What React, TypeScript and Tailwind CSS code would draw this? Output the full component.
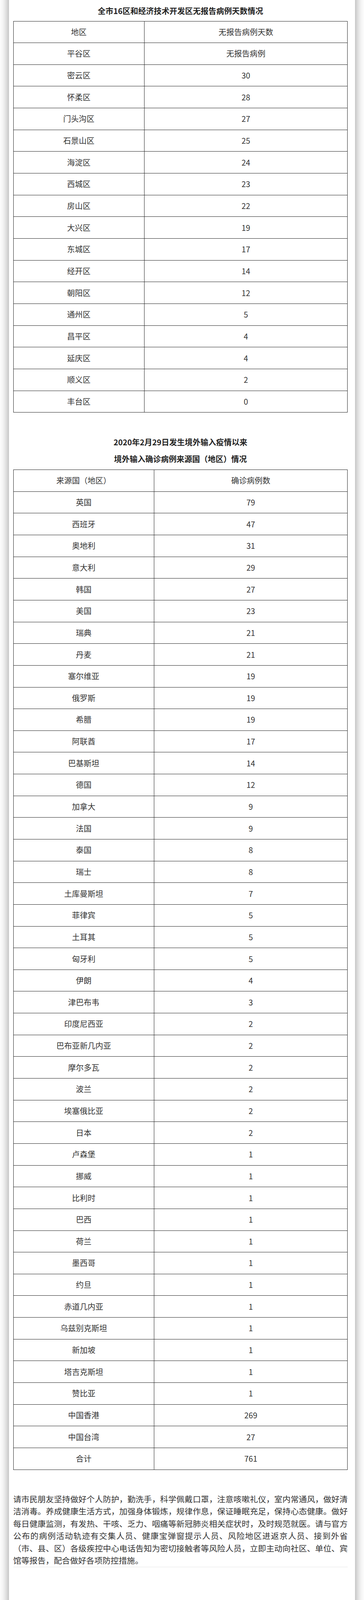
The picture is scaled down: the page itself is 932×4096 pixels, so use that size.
import React from 'react';

const districts: [string, string][] = [
  ['平谷区', '无报告病例'],
  ['密云区', '30'],
  ['怀柔区', '28'],
  ['门头沟区', '27'],
  ['石景山区', '25'],
  ['海淀区', '24'],
  ['西城区', '23'],
  ['房山区', '22'],
  ['大兴区', '19'],
  ['东城区', '17'],
  ['经开区', '14'],
  ['朝阳区', '12'],
  ['通州区', '5'],
  ['昌平区', '4'],
  ['延庆区', '4'],
  ['顺义区', '2'],
  ['丰台区', '0'],
];

const sources: [string, string][] = [
  ['英国', '79'],
  ['西班牙', '47'],
  ['奥地利', '31'],
  ['意大利', '29'],
  ['韩国', '27'],
  ['美国', '23'],
  ['瑞典', '21'],
  ['丹麦', '21'],
  ['塞尔维亚', '19'],
  ['俄罗斯', '19'],
  ['希腊', '19'],
  ['阿联酋', '17'],
  ['巴基斯坦', '14'],
  ['德国', '12'],
  ['加拿大', '9'],
  ['法国', '9'],
  ['泰国', '8'],
  ['瑞士', '8'],
  ['土库曼斯坦', '7'],
  ['菲律宾', '5'],
  ['土耳其', '5'],
  ['匈牙利', '5'],
  ['伊朗', '4'],
  ['津巴布韦', '3'],
  ['印度尼西亚', '2'],
  ['巴布亚新几内亚', '2'],
  ['摩尔多瓦', '2'],
  ['波兰', '2'],
  ['埃塞俄比亚', '2'],
  ['日本', '2'],
  ['卢森堡', '1'],
  ['挪威', '1'],
  ['比利时', '1'],
  ['巴西', '1'],
  ['荷兰', '1'],
  ['墨西哥', '1'],
  ['约旦', '1'],
  ['赤道几内亚', '1'],
  ['乌兹别克斯坦', '1'],
  ['新加坡', '1'],
  ['塔吉克斯坦', '1'],
  ['赞比亚', '1'],
  ['中国香港', '269'],
  ['中国台湾', '27'],
  ['合计', '761'],
];

const notice = [
  '请市民朋友坚持做好个人防护，勤洗手，科学佩戴口罩，注意咳嗽礼仪，室内常通风，做好清',
  '洁消毒。养成健康生活方式，加强身体锻炼，规律作息，保证睡眠充足，保持心态健康。做好',
  '每日健康监测，有发热、干咳、乏力、咽痛等新冠肺炎相关症状时，及时规范就医。请与官方',
  '公布的病例活动轨迹有交集人员、健康宝弹窗提示人员、风险地区进返京人员、接到外省',
  '（市、县、区）各级疾控中心电话告知为密切接触者等风险人员，立即主动向社区、单位、宾',
  '馆等报告，配合做好各项防控措施。',
];

const DataTable: React.FC<{ head: [string, string]; rows: [string, string][]; wide?: boolean }> = ({ head, rows, wide }) => {
  const all = [head, ...rows];
  return (
    <div className="border-t border-l border-r border-[#222]">
      {all.map(([a, b], i) => (
        <div
          key={i}
          className={
            wide
              ? 'grid grid-cols-[360.2px_1fr] h-[55.65px] border-b border-[#222]'
              : 'grid grid-cols-[335.2px_1fr] h-[55.66px] border-b border-[#222]'
          }
        >
          <div className="flex items-center justify-center border-r border-[#222]">{a}</div>
          <div className="flex items-center justify-center">{b}</div>
        </div>
      ))}
    </div>
  );
};

export default function App() {
  return (
    <div className="min-h-[4096px] bg-white overflow-hidden font-['Noto_Sans_CJK_SC','Noto_Sans',sans-serif] text-[#333]">
      <div className="mx-[23.3px] -mt-[40px] pt-[40px] min-h-[4180px] bg-white shadow-[0_0_24px_rgba(0,0,0,0.45)] pl-[10.4px] pr-[18.4px]">
        {/* 无报告病例天数 */}
        <h2 className="mt-[13px] text-center text-[20px] leading-[29px] font-bold text-[#222]">
          全市16区和经济技术开发区无报告病例天数情况
        </h2>
        <div className="mt-[11.5px] text-[20px]">
          <DataTable head={['地区', '无报告病例天数']} rows={districts} />
        </div>

        {/* 境外输入来源 */}
        <div className="mt-[53.5px] text-center text-[20px] leading-[43px] font-bold text-[#222]">
          <div>2020年2月29日发生境外输入疫情以来</div>
          <div>境外输入确诊病例来源国（地区）情况</div>
        </div>
        <div className="mt-[6.3px] text-[20px]">
          <DataTable head={['来源国（地区）', '确诊病例数']} rows={sources} wide />
        </div>

        {/* 提示 */}
        <div className="mt-[59.3px] border-b border-[#e6e6e6] text-[20.8px] leading-[31.5px] text-[#333]">
          {notice.map((line, i) => (
            <div
              key={i}
              className={i < notice.length - 1 ? 'text-justify [text-align-last:justify] whitespace-nowrap' : 'text-left'}
            >
              {line}
            </div>
          ))}
        </div>
      </div>
    </div>
  );
}
